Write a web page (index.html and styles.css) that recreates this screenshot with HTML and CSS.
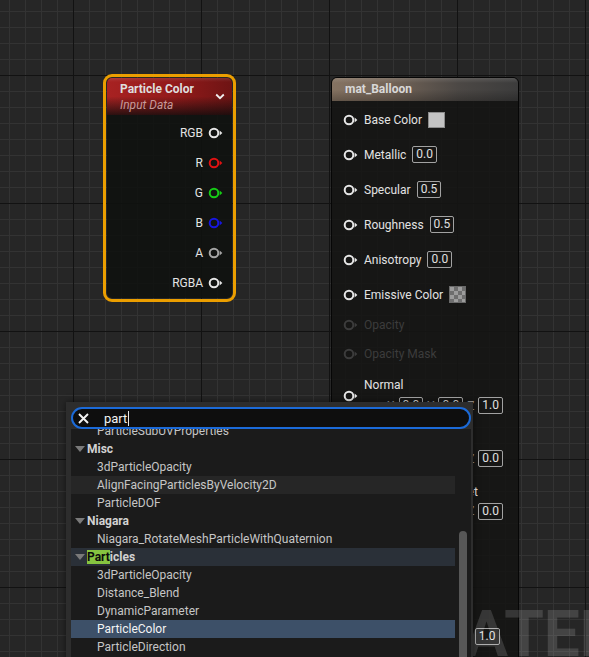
FILE: index.html
```html
<!DOCTYPE html>
<html>
<head>
<meta charset="utf-8">
<link rel="stylesheet" href="styles.css">
</head>
<body>
<svg class="defs" width="0" height="0">
  <symbol id="pin" viewBox="0 0 15 12">
    <circle cx="6" cy="6" r="4.3" fill="none" stroke="currentColor" stroke-width="2"/>
    <path d="M11.6 3.4 L14.4 6 L11.6 8.6 Z" fill="currentColor"/>
  </symbol>
</svg>
<div class="canvas">

  <div class="selected pc">
    <div class="node">
      <div class="hdr red">
        <div class="htext">
          <div class="title">Particle Color</div>
          <div class="sub">Input Data</div>
        </div>
        <svg class="chev" width="10" height="7" viewBox="0 0 10 7"><path d="M1.2 1.5 L5 5.2 L8.8 1.5" fill="none" stroke="#f0f0f0" stroke-width="1.8"/></svg>
      </div>
      <div class="outs">
        <div class="out"><span>RGB</span><svg class="pin c-w"><use href="#pin"/></svg></div>
        <div class="out"><span>R</span><svg class="pin c-r"><use href="#pin"/></svg></div>
        <div class="out"><span>G</span><svg class="pin c-g"><use href="#pin"/></svg></div>
        <div class="out"><span>B</span><svg class="pin c-b"><use href="#pin"/></svg></div>
        <div class="out"><span>A</span><svg class="pin c-a"><use href="#pin"/></svg></div>
        <div class="out"><span>RGBA</span><svg class="pin c-w"><use href="#pin"/></svg></div>
      </div>
    </div>
  </div>

  <div class="node mat">
    <div class="hdr brown"><span class="title">mat_Balloon</span></div>
    <div class="ins">
      <div class="in r35"><svg class="pin c-w"><use href="#pin"/></svg><span>Base Color</span><span class="swatch"></span></div>
      <div class="in r35"><svg class="pin c-w"><use href="#pin"/></svg><span>Metallic</span><span class="val">0.0</span></div>
      <div class="in r35"><svg class="pin c-w"><use href="#pin"/></svg><span>Specular</span><span class="val">0.5</span></div>
      <div class="in r35"><svg class="pin c-w"><use href="#pin"/></svg><span>Roughness</span><span class="val">0.5</span></div>
      <div class="in r35"><svg class="pin c-w"><use href="#pin"/></svg><span>Anisotropy</span><span class="val">0.0</span></div>
      <div class="in r35"><svg class="pin c-w"><use href="#pin"/></svg><span>Emissive Color</span><span class="checker"></span></div>
      <div class="in r25 dim"><svg class="pin"><use href="#pin"/></svg><span>Opacity</span></div>
      <div class="in r34 dim"><svg class="pin"><use href="#pin"/></svg><span>Opacity Mask</span></div>
      <div class="vec b-normal">
        <svg class="pin c-w"><use href="#pin"/></svg>
        <div class="vcol">
          <div class="vlabel">Normal</div>
          <div class="vvals"><span class="axis">X</span><span class="val">0.0</span><span class="axis">Y</span><span class="val">0.0</span><span class="axis">Z</span><span class="val">1.0</span></div>
        </div>
      </div>
      <div class="vec b-tangent">
        <svg class="pin c-w"><use href="#pin"/></svg>
        <div class="vcol">
          <div class="vlabel">Tangent</div>
          <div class="vvals"><span class="axis">X</span><span class="val">1.0</span><span class="axis">Y</span><span class="val">0.0</span><span class="axis">Z</span><span class="val">0.0</span></div>
        </div>
      </div>
      <div class="vec b-wpo">
        <svg class="pin c-w"><use href="#pin"/></svg>
        <div class="vcol">
          <div class="vlabel">World Position Offset</div>
          <div class="vvals"><span class="axis">X</span><span class="val">0.0</span><span class="axis">Y</span><span class="val">0.0</span><span class="axis">Z</span><span class="val">0.0</span></div>
        </div>
      </div>
      <div class="in r33 dim"><svg class="pin"><use href="#pin"/></svg><span>Subsurface Color</span></div>
      <div class="in r33 dim"><svg class="pin"><use href="#pin"/></svg><span>Custom Data 0</span></div>
      <div class="in r33 dim"><svg class="pin"><use href="#pin"/></svg><span>Custom Data 1</span></div>
      <div class="in r32 ao"><svg class="pin c-w"><use href="#pin"/></svg><span>Ambient Occlusion</span><span class="val">1.0</span></div>
    </div>
  </div>

  <div class="watermark"><span class="wm-m">M</span>ATERIAL</div>

  <div class="popup">
    <div class="search">
      <svg class="xicon" width="11" height="11" viewBox="0 0 11 11"><path d="M1 1 L10 10 M10 1 L1 10" stroke="#f2f2f2" stroke-width="1.9" fill="none"/></svg>
      <span class="query">part</span><span class="caret"></span>
    </div>
    <div class="list">
      <div class="rows">
        <div class="row item">ParticleSubUVProperties</div>
        <div class="row cat"><svg class="tri" width="10" height="6" viewBox="0 0 10 6"><path d="M0 0 H10 L5 6 Z" fill="#7a7a7a"/></svg><span>Misc</span></div>
        <div class="row item">3dParticleOpacity</div>
        <div class="row item hover">AlignFacingParticlesByVelocity2D</div>
        <div class="row item">ParticleDOF</div>
        <div class="row cat"><svg class="tri" width="10" height="6" viewBox="0 0 10 6"><path d="M0 0 H10 L5 6 Z" fill="#7a7a7a"/></svg><span>Niagara</span></div>
        <div class="row item">Niagara_RotateMeshParticleWithQuaternion</div>
        <div class="row cat catsel"><svg class="tri" width="10" height="6" viewBox="0 0 10 6"><path d="M0 0 H10 L5 6 Z" fill="#7a7a7a"/></svg><span><span class="hl">Part</span>icles</span></div>
        <div class="row item">3dParticleOpacity</div>
        <div class="row item">Distance_Blend</div>
        <div class="row item">DynamicParameter</div>
        <div class="row item sel">ParticleColor</div>
        <div class="row item">ParticleDirection</div>
      </div>
      <div class="scrollbar"></div>
    </div>
  </div>

</div>
</body>
</html>
```

FILE: styles.css
```css
* { box-sizing: border-box; }
body {
  margin: 0;
  font-family: Roboto, "Liberation Sans", sans-serif;
  font-size: 12px;
  background: #262626;
}
.defs { position: absolute; width: 0; height: 0; }
.canvas {
  position: relative;
  width: 589px;
  height: 657px;
  overflow: hidden;
  background-color: #262626;
  background-image:
    linear-gradient(#121212 1px, transparent 1px),
    linear-gradient(90deg, #121212 1px, transparent 1px),
    linear-gradient(#333333 1px, transparent 1px),
    linear-gradient(90deg, #333333 1px, transparent 1px);
  background-size: 128px 128px, 128px 128px, 16px 16px, 16px 16px;
  background-position: 0 75px, 73px 0, 0 11px, 9px 0;
}

.pin { width: 15px; height: 12px; flex: none; display: block; }
.c-w { color: #e6e6e6; }
.c-r { color: #e01212; }
.c-g { color: #16cc16; }
.c-b { color: #1717e0; }
.c-a { color: #a4a4a4; }

/* Particle Color node */
.selected {
  position: absolute;
  left: 103px;
  top: 74px;
  width: 133px;
  height: 228px;
  border: 3px solid #eb9e00;
  border-radius: 9px;
  padding: 1px;
}
.selected .node {
  height: 100%;
  border-radius: 5px;
  background: rgba(16, 18, 16, 0.9);
  overflow: hidden;
}
.hdr.red {
  height: 37px;
  display: flex;
  justify-content: space-between;
  align-items: center;
  padding: 1px 7px 0 13px;
  background:
    linear-gradient(180deg, rgba(255,255,255,0.1) 0, rgba(255,255,255,0) 4px, rgba(0,0,0,0) 50%, rgba(12,12,12,0.8) 100%),
    linear-gradient(90deg, #a82222 0%, #921a1a 55%, #6e1414 100%);
}
.htext { display: flex; flex-direction: column; }
.title { font-weight: bold; color: #dedede; line-height: 16px; }
.sub { font-style: italic; color: #c79a9a; line-height: 16px; }
.chev { display: block; margin-top: -2px; }
.outs { padding-top: 3px; }
.out {
  height: 30px;
  display: flex;
  justify-content: flex-end;
  align-items: center;
  gap: 5px;
  padding-right: 9px;
  color: #e4e4e4;
}

/* Material node */
.mat {
  position: absolute;
  left: 331px;
  top: 77px;
  width: 188px;
  height: 600px;
  border: 1px solid #060606;
  border-radius: 6px 6px 0 0;
  background: rgba(20, 21, 19, 0.88);
}
.hdr.brown {
  height: 23px;
  line-height: 23px;
  padding-left: 13px;
  border-radius: 5px 5px 0 0;
  background:
    linear-gradient(180deg, rgba(255,255,255,0.12) 0, rgba(255,255,255,0) 5px, rgba(0,0,0,0) 50%, rgba(0,0,0,0.25) 100%),
    linear-gradient(90deg, #857362 0%, #746558 30%, #4c4845 68%, #3c3c3c 100%);
}
.hdr.brown .title { color: #d8d8d8; line-height: 23px; }
.ins { padding-top: 1px; color: #e2e2e2; }
.in {
  display: flex;
  align-items: center;
  gap: 6px;
  padding-left: 11px;
}
.r35 { height: 35px; }
.r34 { height: 34px; }
.r33 { height: 33px; }
.r32 { height: 32px; }
.r25 { height: 25px; }
.in.ao .val { margin-left: 4px; }
.dim { color: #3c3c3c; }
.val {
  border: 1px solid #a2a2a2;
  border-radius: 2px;
  height: 17px;
  line-height: 15px;
  padding: 0 3px;
  color: #e0e0e0;
  font-size: 12px;
}
.swatch {
  width: 17px;
  height: 16px;
  background: #c3c3c3;
  border: 1px solid #8c8c8c;
}
.checker {
  width: 17px;
  height: 17px;
  border: 1px solid #6a6a6a;
  background-color: #9c9c9c;
  background-image:
    linear-gradient(45deg, #6e6e6e 25%, transparent 25%, transparent 75%, #6e6e6e 75%),
    linear-gradient(45deg, #6e6e6e 25%, transparent 25%, transparent 75%, #6e6e6e 75%);
  background-size: 8px 8px;
  background-position: 0 0, 4px 4px;
}
.vec {
  display: grid;
  grid-template-columns: 15px 1fr;
  column-gap: 6px;
  align-items: center;
  padding-left: 11px;
}
.vcol { display: flex; flex-direction: column; }
.vlabel { line-height: 16px; height: 16px; white-space: nowrap; }
.vvals {
  display: flex;
  justify-content: flex-end;
  align-items: center;
  gap: 4px;
  padding-right: 15px;
  margin-top: 4px;
}
.axis { color: #9a9a9a; }
.b-normal { height: 49px; padding-top: 6px; align-items: start; }
.b-normal .pin { margin-top: 13px; }
.b-tangent { height: 49px; padding-top: 9px; }
.b-tangent .vvals { margin-top: 3px; }
.b-wpo { height: 52px; padding-top: 13px; }
.b-wpo .vvals { margin-top: 3px; }

/* watermark */
.watermark {
  position: absolute;
  left: 399px;
  top: 603px;
  font-family: Roboto, "Liberation Sans", sans-serif;
  font-weight: bold;
  font-size: 64px;
  line-height: 64px;
  color: rgba(255, 255, 255, 0.14);
  white-space: nowrap;
}
.wm-m {
  display: inline-block;
  width: 66px;
  text-align: right;
}

/* popup */
.popup {
  position: absolute;
  left: 66px;
  top: 402px;
  width: 407px;
  height: 262px;
  background: #2d2d2d;
  padding: 5px 2px 0 5px;
  display: flex;
  flex-direction: column;
  box-shadow: 0 0 6px rgba(0,0,0,0.5);
}
.search {
  height: 22px;
  flex: none;
  border: 2px solid #1b6ad8;
  border-radius: 11px;
  background: #0e0e0e;
  display: flex;
  align-items: center;
  padding-left: 5px;
}
.xicon { display: block; flex: none; }
.query {
  margin-left: 15px;
  font-size: 13px;
  color: #f2f2f2;
}
.caret {
  width: 1px;
  height: 15px;
  background: #e8e8e8;
  margin-left: 1px;
}
.list {
  flex: 1;
  background: #1b1b1b;
  overflow: hidden;
  position: relative;
}
.rows { margin-top: -7px; padding-right: 16px; }
.row {
  height: 18px;
  line-height: 18px;
  white-space: nowrap;
  overflow: hidden;
}
.item { padding-left: 26px; color: #c6c6c6; }
.cat {
  display: flex;
  align-items: center;
  padding-left: 4px;
  gap: 2px;
  font-weight: bold;
  color: #d2d2d2;
}
.tri { display: block; flex: none; }
.hover { background: #262626; }
.catsel { background: #2a3038; }
.sel { background: #3d5068; color: #f4f4f4; }
.hl { background: #86c440; color: #0c0c0c; }
.scrollbar {
  position: absolute;
  right: 4px;
  top: 102px;
  width: 8px;
  height: 200px;
  border-radius: 4px;
  background: #575757;
}
```
